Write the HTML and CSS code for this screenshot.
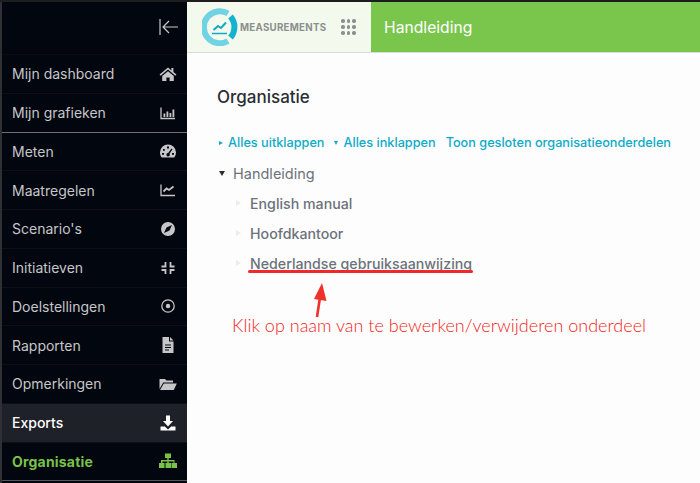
FILE: index.html
```html
<!DOCTYPE html>
<html lang="nl">
<head>
<meta charset="utf-8">
<title>Organisatie</title>
<link rel="stylesheet" href="styles.css">
</head>
<body>
<div class="app">
  <aside class="sidebar">
    <div class="collapse">
      <svg class="collapse-icon" width="20" height="16" viewBox="0 0 20 16"><path d="M1 0v16M19 8H4M10 2 4 8l6 6" fill="none" stroke="#c9c9cb" stroke-width="1.2"/></svg>
    </div>
    <nav class="menu">
      <a class="item"><span>Mijn dashboard</span>
        <svg class="ico" viewBox="0 0 18 16"><path d="M9 1.500 0.600 8.600l1 1.100L9 3.600l7.400 6.100 1-1.100-3-2.500V2h-2v2.500zM3.200 10 9 5.200l5.800 4.800v5H10.600v-3.500H7.400V15H3.200z" fill="#c6c6c8"/></svg></a>
      <a class="item item-group-end"><span>Mijn grafieken</span>
        <svg class="ico" viewBox="0 0 18 16"><path d="M2 2.500v11H16" fill="none" stroke="#c6c6c8" stroke-width="1.300"/><path d="M4.500 8.500h1.800V12H4.500zM7.500 6.500h1.800V12H7.500zM10.500 8h1.800v4h-1.800zM13.500 4.500h1.800V12h-1.800z" fill="#c6c6c8"/></svg></a>
      <a class="item"><span>Meten</span>
        <svg class="ico" viewBox="0 0 18 16"><path fill-rule="evenodd" d="M9 1.500a8 8 0 0 0-8 8c0 1.900.6 3.600 1.700 5h12.600a8 8 0 0 0 1.700-5 8 8 0 0 0-8-8zM8 3.500h2v2H8zM4 6h1.800v1.800H4zM3 10h2v1.800H3zM13 10h2v1.800h-2zM12.500 5.500l1 .8-3 4.500a1.700 1.700 0 1 1-1.300-.7z" fill="#c6c6c8"/></svg></a>
      <a class="item"><span>Maatregelen</span>
        <svg class="ico" viewBox="0 0 18 16"><path d="M2 2.500v11H16" fill="none" stroke="#c6c6c8" stroke-width="1.300"/><path d="M4.500 9.500l3-3 2.500 1.500 4.500-3.500" fill="none" stroke="#c6c6c8" stroke-width="1.800"/></svg></a>
      <a class="item"><span>Scenario's</span>
        <svg class="ico" viewBox="0 0 18 16"><path fill-rule="evenodd" d="M9 1a7 7 0 1 0 0 14A7 7 0 0 0 9 1zM13 4l-2.500 5.500L5 12l2.500-5.500z" fill="#c6c6c8"/></svg></a>
      <a class="item"><span>Initiatieven</span>
        <svg class="ico" viewBox="0 0 18 16"><path d="M6.500 2v4.500H2.500M11.500 2v4.500h4M6.500 14V10H2.500M11.500 14V10h4" fill="none" stroke="#c6c6c8" stroke-width="1.800"/></svg></a>
      <a class="item"><span>Doelstellingen</span>
        <svg class="ico" viewBox="0 0 18 16"><circle cx="9" cy="8" r="6.200" fill="none" stroke="#c6c6c8" stroke-width="1.300"/><circle cx="9" cy="8" r="2.200" fill="#c6c6c8"/></svg></a>
      <a class="item"><span>Rapporten</span>
        <svg class="ico" viewBox="0 0 18 16"><path fill-rule="evenodd" d="M3.500 0H10v4.500h4.500V16h-11zM11 0l3.500 3.500H11zM6 7.500v1h6v-1zM6 10v1h6v-1zM6 12.500v1h4v-1z" fill="#c6c6c8"/></svg></a>
      <a class="item"><span>Opmerkingen</span>
        <svg class="ico ico-wide" viewBox="0 0 18 16"><path d="M0.500 13V3h5.500l1.500 1.500H14v2H4.200zM4.800 7.500h13l-3 6.500H1z" fill="#c6c6c8"/></svg></a>
      <a class="item item-active"><span>Exports</span>
        <svg class="ico ico-white" viewBox="0 0 18 16"><path d="M7 0.500h4V6h3L9 11.500 4 6h3zM1.500 11.500h4.300L9 14.500l3.200-3h4.300V15.500h-15z" fill="#fff"/></svg></a>
      <a class="item item-current"><span>Organisatie</span>
        <svg class="ico ico-tree" viewBox="0 0 20 16"><path d="M7 0.500h6v4.500h-2.300V7H16.500v3H19v5h-5.500v-5h2V8.500H10.700V10H13v5H7.500v-5h1.800V8.500H4.500V10H6.500v5H1v-5h2V7h6.300V5H7z" fill="#79c14a"/></svg></a>
    </nav>
  </aside>
  <div class="content">
    <header class="topbar">
      <div class="brand">
        <svg class="logo" width="38" height="38" viewBox="0 0 38 38">
          <path d="M26 5.500A16 16 0 1 0 26 33" fill="none" stroke="#6fd3e3" stroke-width="6"/>
          <path d="M28.500 8.500A16 16 0 0 1 28.500 29.500" fill="none" stroke="#12b3cf" stroke-width="6"/>
          <path d="M11.500 22l4.500-4 3 2 5-5.500" fill="none" stroke="#12a9c4" stroke-width="2"/>
          <path d="M10 25.500h15" stroke="#12a9c4" stroke-width="1.500"/>
        </svg>
        <span class="brand-name">MEASUREMENTS</span>
        <span class="dots"><i></i><i></i><i></i><i></i><i></i><i></i><i></i><i></i><i></i></span>
      </div>
      <div class="page-name">Handleiding</div>
    </header>
    <main class="main">
      <h1 class="title">Organisatie</h1>
      <div class="links">
        <a class="link"><span class="tri tri-right"></span>Alles uitklappen</a>
        <a class="link"><span class="tri tri-down"></span>Alles inklappen</a>
        <a class="link">Toon gesloten organisatieonderdelen</a>
      </div>
      <ul class="tree">
        <li class="node root"><span class="arrow-open"></span>Handleiding</li>
        <li class="node child"><span class="arrow-leaf"></span>English manual</li>
        <li class="node child"><span class="arrow-leaf"></span>Hoofdkantoor</li>
        <li class="node child"><span class="arrow-leaf"></span>Nederlandse gebruiksaanwijzing</li>
      </ul>
    </main>
  </div>
</div>
<div class="mark-line"></div>
<svg class="mark-arrow" width="20" height="36" viewBox="0 0 20 36"><path d="M8 35 11.500 12" stroke="#f0312b" stroke-width="2.600" fill="none"/><path d="M13 1 5 17l12.500 2z" fill="#f0312b"/></svg>
<div class="mark-text">Klik op naam van te bewerken/verwijderen onderdeel</div>
</body>
</html>
```
FILE: styles.css
```css
* { box-sizing: border-box; }
html, body { margin: 0; height: 100%; overflow: hidden; }
body { position: relative; background: #fdfdfd; font-family: Inter, "Liberation Sans", sans-serif; }
.app { display: flex; height: 483px; border-top: 2px solid #1d1d1f; }
.sidebar { width: 187px; flex: none; background: #02060f; border-left: 2px solid #2e3034; display: flex; flex-direction: column; }
.collapse { height: 53px; display: flex; align-items: center; justify-content: flex-end; padding-right: 8px; padding-bottom: 2px; border-bottom: 1px solid #0b0d12; }
.menu { display: flex; flex-direction: column; }
.item { height: 38.75px; flex: none; display: flex; align-items: center; justify-content: space-between; padding: 0 10px; color: #c6c6c8; font-size: 14px; border-bottom: 1px solid #0e1015; }
.item-group-end { border-bottom: 1px solid #6e7074; }
.item-active { background: #1f2128; color: #fff; font-weight: 500; }
.item-current { color: #79c14a; font-weight: 700; letter-spacing: 0.2px; border-bottom: 1px solid #55575b; }
.ico { width: 18px; height: 16px; display: block; }
.ico-tree { width: 20px; margin-right: -1px; }
.content { flex: 1; display: flex; flex-direction: column; min-width: 0; }
.topbar { height: 51px; display: flex; border-bottom: 1px solid #d9dde3; flex: none; }
.brand { width: 184px; background: #f3f9ec; display: flex; align-items: center; padding-left: 15px; }
.logo { flex: none; }
.brand-name { font-size: 9.700px; font-weight: 700; color: #8b8f90; letter-spacing: 0.3px; }
.dots { display: grid; grid-template-columns: repeat(3, 3px); gap: 2.500px; margin-left: 15px; }
.dots i { width: 3.500px; height: 3.500px; border-radius: 50%; background: #8b8f90; }
.page-name { flex: 1; background: #7ac64d; color: #fff; font-size: 15.700px; display: flex; align-items: center; padding-left: 13px; }
.main { padding: 34px 0 0 30px; }
.title { margin: 0; font-size: 17px; font-weight: 500; color: #2b2e33; line-height: 20px; }
.links { display: flex; margin-top: 28px; font-size: 12.700px; font-weight: 500; color: #0cabc8; line-height: 16px; margin-left: 2px; gap: 10px; }
.link { display: flex; align-items: center; }
.tri { display: inline-block; margin-right: 5px; width: 0; height: 0; }
.tri-right { border-left: 4px solid #0cabc8; border-top: 2.500px solid transparent; border-bottom: 2.500px solid transparent; }
.tri-down { border-top: 4px solid #0cabc8; border-left: 2.500px solid transparent; border-right: 2.500px solid transparent; }
.tree { list-style: none; margin: 7px 0 0; padding: 0; color: #6c727a; font-size: 14.200px; }
.node { height: 30px; display: flex; align-items: center; }
.root { padding-left: 2px; font-size: 14.500px; }
.child { padding-left: 19px; font-weight: 500; }
.arrow-open { width: 0; height: 0; border-top: 5px solid #2a2d33; border-left: 3px solid transparent; border-right: 3px solid transparent; margin-right: 8px; }
.arrow-leaf { width: 0; height: 0; border-left: 5px solid #ececef; border-top: 3.500px solid transparent; border-bottom: 3.500px solid transparent; margin-right: 9px; }
.mark-line { position: absolute; left: 248px; top: 270px; width: 225px; height: 3px; border-radius: 2px; background: #f0282a; }
.mark-arrow { position: absolute; left: 309px; top: 282px; }
.mark-text { position: absolute; left: 232px; top: 314px; font-family: Lato, sans-serif; font-weight: 300; font-size: 18px; line-height: 22px; color: #f2261c; white-space: nowrap; }
```
